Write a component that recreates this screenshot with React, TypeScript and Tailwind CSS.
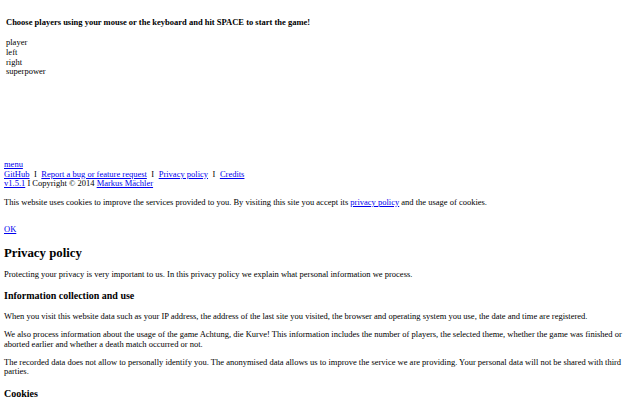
import React from 'react';

const link = 'text-[#0000ee] underline';

function Sep() {
  return <span className="mx-[4.5px]">I</span>;
}

export default function App() {
  return (
    <div className="min-h-[400px] bg-white px-[4px] font-['Liberation_Serif','Times_New_Roman',serif] text-[8.5px] leading-[9.5px] text-black">
      {/* game setup */}
      <div className="pl-[2px]">
        <div className="pt-[18px] font-bold">
          Choose players using your mouse or the keyboard and hit SPACE to start the game!
        </div>
        <div className="mt-[10.7px] leading-[9.7px]">
          <div>player</div>
          <div>left</div>
          <div>right</div>
          <div>superpower</div>
        </div>
      </div>

      {/* footer */}
      <div className="mt-[83.3px]">
        <div>
          <a className={link}>menu</a>
        </div>
        <div>
          <a className={link}>GitHub</a>
          <Sep />
          <a className={link}>Report a bug or feature request</a>
          <Sep />
          <a className={link}>Privacy policy</a>
          <Sep />
          <a className={link}>Credits</a>
        </div>
        <div>
          <a className={link}>v1.5.1</a> I Copyright © 2014 <a className={link}>Markus Mächler</a>
        </div>
      </div>

      {/* cookie notice */}
      <p className="mt-[9.2px]">
        This website uses cookies to improve the services provided to you. By visiting this site you accept its{' '}
        <a className={link}>privacy policy</a> and the usage of cookies.
      </p>
      <div className="mt-[17.8px]">
        <a className={link}>OK</a>
      </div>

      {/* privacy policy */}
      <h2 className="mt-[10.9px] text-[12.8px] font-bold leading-[14px]">Privacy policy</h2>
      <p className="mt-[10.5px]">
        Protecting your privacy is very important to us. In this privacy policy we explain what personal information we
        process.
      </p>
      <h3 className="mt-[10.75px] text-[10px] font-bold leading-[11px]">Information collection and use</h3>
      <p className="mt-[10.5px]">
        When you visit this website data such as your IP address, the address of the last site you visited, the browser
        and operating system you use, the date and time are registered.
      </p>
      <p className="mt-[9px]">
        We also process information about the usage of the game Achtung, die Kurve! This information includes the number
        of players, the selected theme, whether the game was finished or aborted earlier and whether a death match
        occurred or not.
      </p>
      <p className="mt-[8.45px]">
        The recorded data does not allow to personally identify you. The anonymised data allows us to improve the service
        we are providing. Your personal data will not be shared with third parties.
      </p>
      <h3 className="mt-[10.8px] text-[10px] font-bold leading-[11px]">Cookies</h3>
    </div>
  );
}
